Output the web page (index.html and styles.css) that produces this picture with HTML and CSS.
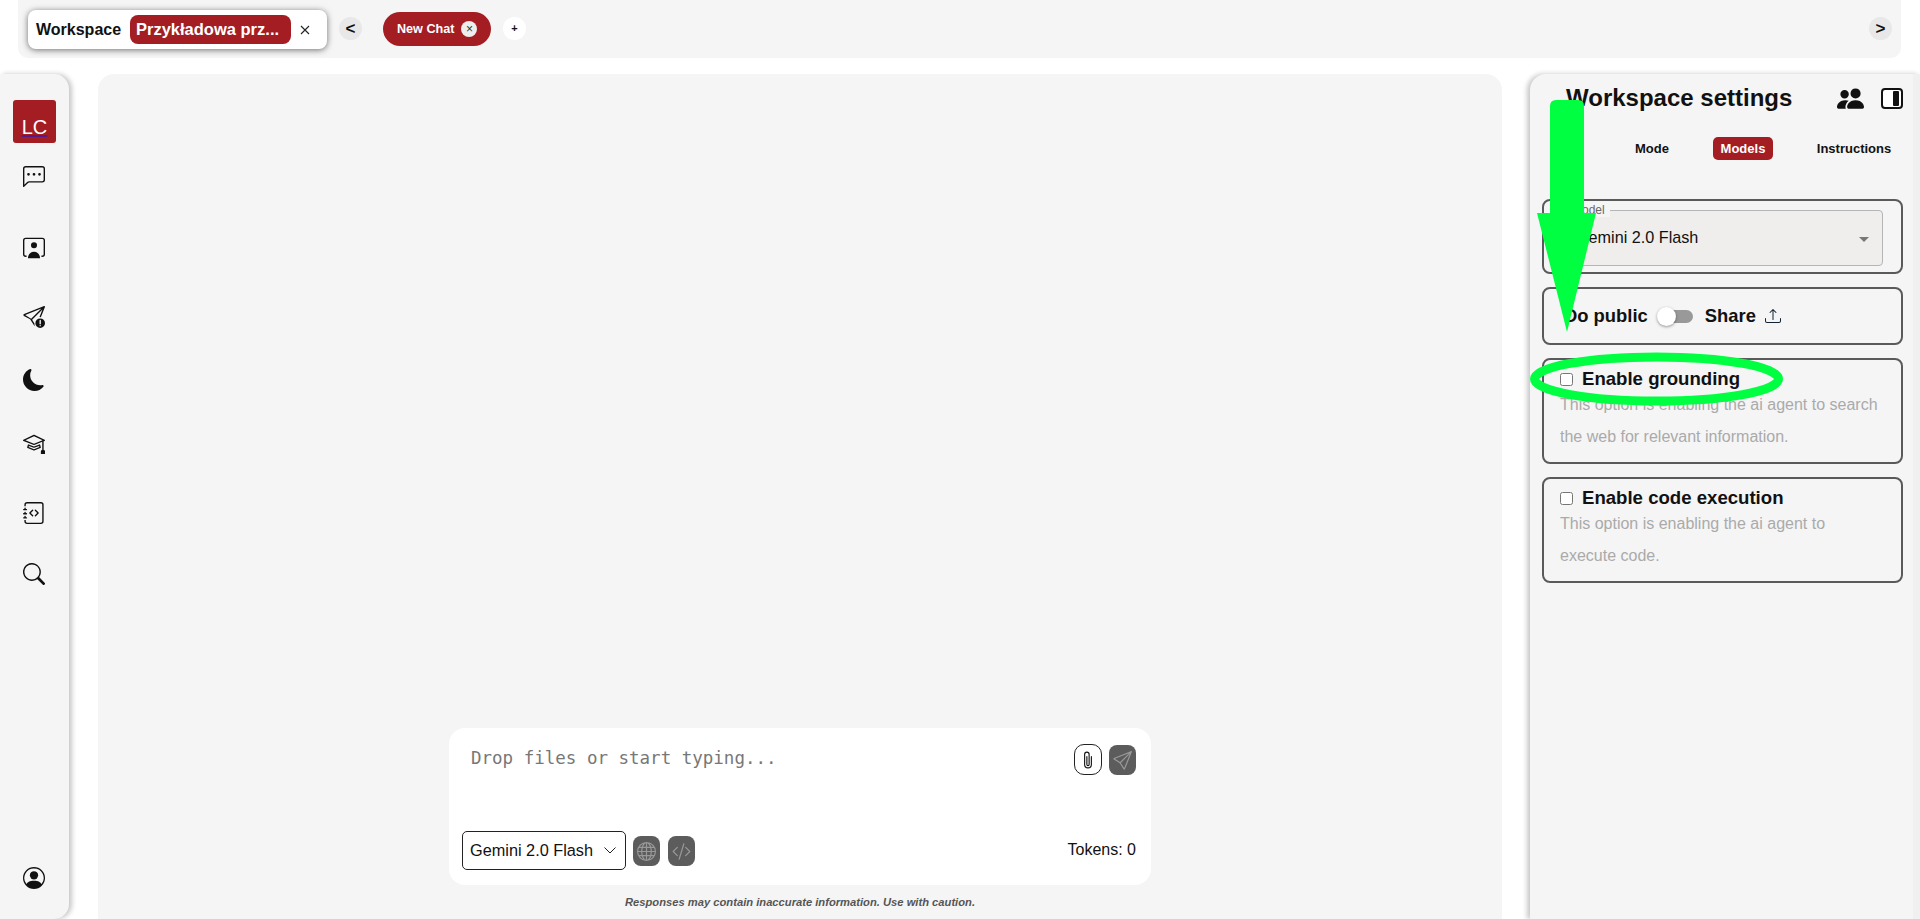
FILE: index.html
```html
<!DOCTYPE html>
<html lang="en">
<head>
    <meta charset="UTF-8">
    <meta name="viewport" content="width=device-width, initial-scale=1.0">
    <title>Workspace</title>
    <link rel="stylesheet" href="styles.css">
</head>
<body>
    <!-- Top tabs -->
    <header class="topbar">
        <div class="workspace-tab">
            <span class="workspace-label">Workspace</span>
            <span class="workspace-name">Przykładowa prz...</span>
            <svg class="workspace-close" viewBox="0 0 10 10"><path d="M1 1l8 8M9 1l-8 8"/></svg>
        </div>
        <button class="round-btn scroll-left">&lt;</button>
        <div class="chat-tab">
            <span>New Chat</span>
            <span class="chat-tab-close">&times;</span>
        </div>
        <button class="round-btn add-btn">+</button>
        <button class="round-btn scroll-right">&gt;</button>
    </header>

    <div class="content">
        <!-- Left menu -->
        <aside class="sidebar">
            <a href="#" class="avatar">LC</a>
            <svg class="side-icon icon-chat" viewBox="0 0 16 16"><path d="M14 1a1 1 0 0 1 1 1v8a1 1 0 0 1-1 1H4.414A2 2 0 0 0 3 11.586l-2 2V2a1 1 0 0 1 1-1h12zM2 0a2 2 0 0 0-2 2v12.793a.5.5 0 0 0 .854.353l2.853-2.853A1 1 0 0 1 4.414 12H14a2 2 0 0 0 2-2V2a2 2 0 0 0-2-2H2z"/><path d="M5 6a1 1 0 1 1-2 0 1 1 0 0 1 2 0zm4 0a1 1 0 1 1-2 0 1 1 0 0 1 2 0zm4 0a1 1 0 1 1-2 0 1 1 0 0 1 2 0z"/></svg>
            <svg class="side-icon icon-video" viewBox="0 0 16 16"><path d="M2 0.5h12a2 2 0 0 1 2 2v10a2 2 0 0 1-2 2h-.6v-1h.6a1 1 0 0 0 1-1v-10a1 1 0 0 0-1-1H2a1 1 0 0 0-1 1v10a1 1 0 0 0 1 1h.6v1H2a2 2 0 0 1-2-2v-10a2 2 0 0 1 2-2z"/><path d="M10.2 6a2.2 2.2 0 1 1-4.400 0 2.200 2.200 0 0 1 4.400 0zM3.600 15.500c0-2.400 1.600-4.700 4.400-4.700s4.400 2.300 4.400 4.700z"/></svg>
            <svg class="side-icon icon-send" viewBox="0 0 16 16"><path d="M15.854.146a.5.5 0 0 1 .11.54L13 8.1a4.500 4.500 0 0 0-1-.1l2.130-5.424-7.494 7.494 1.700 2.630a4.500 4.500 0 0 0 .2 1.800l-.2.100-3.178-4.995L.643 7.184a.75.75 0 0 1 .124-1.33L15.314.037a.5.5 0 0 1 .54.11ZM13.423 1.869 1.591 6.602l4.339 2.760 7.494-7.493Z"/><path fill-rule="evenodd" d="M12.500 16a3.500 3.500 0 1 0 0-7 3.500 3.500 0 0 0 0 7zm.5-5.500a.5.5 0 0 0-1 0v2.400a.5.5 0 0 0 1 0zm0 3.800a.5.5 0 1 0-1 0 .5.5 0 0 0 1 0z"/></svg>
            <svg class="side-icon icon-moon" viewBox="0 0 16 16"><path d="M6 .278a.768.768 0 0 1 .08.858 7.208 7.208 0 0 0-.878 3.46c0 4.021 3.278 7.277 7.318 7.277.527 0 1.040-.055 1.533-.16a.787.787 0 0 1 .81.316.733.733 0 0 1-.031.893A8.349 8.349 0 0 1 8.344 16C3.734 16 0 12.286 0 7.710 0 4.266 2.114 1.312 5.124.060A.752.752 0 0 1 6 .278z"/></svg>
            <svg class="side-icon icon-school" viewBox="0 0 16 16"><path d="M8.211 2.047a.5.5 0 0 0-.422 0l-7.5 3.5a.5.5 0 0 0 .025.917l7.5 3a.5.5 0 0 0 .372 0L14 7.140V13a1 1 0 0 0-1 1v2h3v-2a1 1 0 0 0-1-1V6.739l.686-.275a.5.5 0 0 0 .025-.917l-7.500-3.500ZM8 8.460 1.758 5.965 8 3.052l6.242 2.913L8 8.460Z"/><path d="M4.176 9.032a.5.5 0 0 0-.656.327l-.5 1.700a.5.5 0 0 0 .294.605l4.500 1.800a.5.5 0 0 0 .372 0l4.500-1.800a.5.5 0 0 0 .294-.605l-.5-1.700a.5.5 0 0 0-.656-.327L8 10.466 4.176 9.032Zm-.068 1.873.22-.748 3.496 1.311a.5.5 0 0 0 .352 0l3.496-1.311.22.748L8 12.460l-3.892-1.556Z"/></svg>
            <svg class="side-icon icon-journal" viewBox="0 0 16 16"><path fill-rule="evenodd" d="M8.646 5.646a.5.5 0 0 1 .708 0l2 2a.5.5 0 0 1 0 .708l-2 2a.5.5 0 0 1-.708-.708L10.293 8 8.646 6.354a.5.5 0 0 1 0-.708zm-1.292 0a.5.5 0 0 0-.708 0l-2 2a.5.5 0 0 0 0 .708l2 2a.5.5 0 0 0 .708-.708L5.707 8l1.647-1.646a.5.5 0 0 0 0-.708z"/><path d="M3 0h10a2 2 0 0 1 2 2v12a2 2 0 0 1-2 2H3a2 2 0 0 1-2-2v-1h1v1a1 1 0 0 0 1 1h10a1 1 0 0 0 1-1V2a1 1 0 0 0-1-1H3a1 1 0 0 0-1 1v1H1V2a2 2 0 0 1 2-2z"/><path d="M1 5v-.5a.5.5 0 0 1 1 0V5h.5a.5.5 0 0 1 0 1h-2a.5.5 0 0 1 0-1H1zm0 3v-.5a.5.5 0 0 1 1 0V8h.5a.5.5 0 0 1 0 1h-2a.5.5 0 0 1 0-1H1zm0 3v-.5a.5.5 0 0 1 1 0v.5h.5a.5.5 0 0 1 0 1h-2a.5.5 0 0 1 0-1H1z"/></svg>
            <svg class="side-icon icon-search" viewBox="0 0 16 16"><path d="M11.742 10.344a6.500 6.500 0 1 0-1.397 1.398h-.001c.03.04.062.078.098.115l3.850 3.850a1 1 0 0 0 1.415-1.414l-3.850-3.850a1.007 1.007 0 0 0-.115-.1zM12 6.500a5.500 5.500 0 1 1-11 0 5.500 5.500 0 0 1 11 0z"/></svg>
            <svg class="side-icon icon-profile" viewBox="0 0 16 16"><path d="M11 6a3 3 0 1 1-6 0 3 3 0 0 1 6 0z"/><path fill-rule="evenodd" d="M0 8a8 8 0 1 1 16 0A8 8 0 0 1 0 8zm8-7a7 7 0 0 0-5.468 11.370C3.242 11.226 4.805 10 8 10s4.757 1.225 5.468 2.370A7 7 0 0 0 8 1z"/></svg>
        </aside>

        <!-- Chat area -->
        <main class="main-panel">
            <div class="chat-card">
                <div class="chat-input-row">
                    <span class="placeholder">Drop files or start typing...</span>
                    <div class="chat-actions">
                        <button class="attach-btn">
                            <svg viewBox="0 0 16 16"><path d="M4.500 3a2.500 2.500 0 0 1 5 0v9a1.500 1.500 0 0 1-3 0V5a.5.5 0 0 1 1 0v7a.5.5 0 0 0 1 0V3a1.500 1.500 0 1 0-3 0v9a2.500 2.500 0 0 0 5 0V5a.5.5 0 0 1 1 0v7a3.500 3.500 0 1 1-7 0V3z"/></svg>
                        </button>
                        <button class="grey-btn">
                            <svg viewBox="0 0 16 16"><path d="M15.854.146a.5.5 0 0 1 .11.54l-5.819 14.547a.75.75 0 0 1-1.329.124l-3.178-4.995L.643 7.184a.75.75 0 0 1 .124-1.330L15.314.037a.5.5 0 0 1 .54.11ZM6.636 10.070l2.761 4.338L14.130 2.576 6.636 10.070Zm6.787-8.201L1.591 6.602l4.339 2.760 7.494-7.493Z"/></svg>
                        </button>
                    </div>
                </div>
                <div class="chat-bottom-row">
                    <div class="model-select">
                        <span>Gemini 2.0 Flash</span>
                        <svg viewBox="0 0 12 7"><path d="M.5.5 6 6 11.500.5"/></svg>
                    </div>
                    <button class="grey-btn">
                        <svg viewBox="0 0 16 16"><path d="M0 8a8 8 0 1 1 16 0A8 8 0 0 1 0 8zm7.500-6.923c-.67.204-1.335.82-1.887 1.855A7.970 7.970 0 0 0 5.145 4H7.500V1.077zM4.090 4a9.267 9.267 0 0 1 .64-1.539 6.700 6.700 0 0 1 .597-.933A7.025 7.025 0 0 0 2.255 4H4.090zm-.582 3.500c.03-.877.138-1.718.312-2.500H1.674a6.958 6.958 0 0 0-.656 2.500h2.490zM4.847 5a12.500 12.500 0 0 0-.338 2.500H7.500V5H4.847zM8.500 5v2.500h2.990a12.495 12.495 0 0 0-.337-2.500H8.500zM4.510 8.500a12.500 12.500 0 0 0 .337 2.500H7.500V8.500H4.510zm3.990 0V11h2.653c.187-.765.306-1.608.338-2.500H8.500zM5.145 12c.138.386.295.744.468 1.068.552 1.035 1.218 1.650 1.887 1.855V12H5.145zm.182 2.472a6.696 6.696 0 0 1-.597-.933A9.268 9.268 0 0 1 4.090 12H2.255a7.024 7.024 0 0 0 3.072 2.472zM3.820 11a13.652 13.652 0 0 1-.312-2.500h-2.490c.062.890.291 1.733.656 2.500H3.820zm6.853 3.472A7.024 7.024 0 0 0 13.745 12H11.910a9.270 9.270 0 0 1-.64 1.539 6.688 6.688 0 0 1-.597.933zM8.500 12v2.923c.67-.204 1.335-.82 1.887-1.855.173-.324.33-.682.468-1.068H8.500zm3.680-1h2.146c.365-.767.594-1.610.656-2.500h-2.490a13.650 13.650 0 0 1-.312 2.500zm2.802-3.500a6.959 6.959 0 0 0-.656-2.500H12.180c.174.782.282 1.623.312 2.500h2.490zM11.270 2.461c.247.464.462.98.64 1.539h1.835a7.024 7.024 0 0 0-3.072-2.472c.218.284.418.598.597.933zM10.855 4a7.966 7.966 0 0 0-.468-1.068C9.835 1.897 9.170 1.282 8.500 1.077V4h2.355z"/></svg>
                    </button>
                    <button class="grey-btn">
                        <svg viewBox="0 0 16 16"><path d="M10.478 1.647a.5.5 0 1 0-.956-.294l-4 13a.5.5 0 0 0 .956.294l4-13zM4.854 4.146a.5.5 0 0 1 0 .708L1.707 8l3.147 3.146a.5.5 0 0 1-.708.708l-3.500-3.500a.5.5 0 0 1 0-.708l3.500-3.500a.5.5 0 0 1 .708 0zm6.292 0a.5.5 0 0 0 0 .708L14.293 8l-3.147 3.146a.5.5 0 0 0 .708.708l3.500-3.500a.5.5 0 0 0 0-.708l-3.500-3.500a.5.5 0 0 0-.708 0z"/></svg>
                    </button>
                    <span class="tokens">Tokens: 0</span>
                </div>
            </div>
            <p class="disclaimer">Responses may contain inaccurate information. Use with caution.</p>
        </main>

        <!-- Right settings -->
        <aside class="settings">
            <div class="settings-head">
                <h2>Workspace settings</h2>
                <svg class="people-icon" viewBox="0 0 16 16"><path d="M7 14s-1 0-1-1 1-4 5-4 5 3 5 4-1 1-1 1H7Zm4-6a3 3 0 1 0 0-6 3 3 0 0 0 0 6Zm-5.784 6A2.238 2.238 0 0 1 5 13c0-1.355.68-2.750 1.936-3.720A6.325 6.325 0 0 0 5 9c-4 0-5 3-5 4s1 1 1 1h4.216ZM4.500 8a2.500 2.500 0 1 0 0-5 2.500 2.500 0 0 0 0 5Z"/></svg>
                <div class="panel-icon"><span></span></div>
            </div>

            <div class="settings-tabs">
                <span class="settings-tab tab-mode">Mode</span>
                <span class="settings-tab tab-active">Models</span>
                <span class="settings-tab tab-instructions">Instructions</span>
            </div>

            <section class="box box-model">
                <div class="model-field">
                    <span class="model-label">Model</span>
                    <span>Gemini 2.0 Flash</span>
                    <span class="caret"></span>
                </div>
            </section>

            <section class="box box-share">
                <span class="share-text">Do public</span>
                <span class="toggle"><span class="toggle-knob"></span></span>
                <span class="share-text">Share</span>
                <svg class="upload-icon" viewBox="0 0 16 16"><path d="M.5 9.900a.5.5 0 0 1 .5.5v2.500a1 1 0 0 0 1 1h12a1 1 0 0 0 1-1v-2.500a.5.5 0 0 1 1 0v2.500a2 2 0 0 1-2 2H2a2 2 0 0 1-2-2v-2.500a.5.5 0 0 1 .5-.5z"/><path d="M7.646 1.146a.5.5 0 0 1 .708 0l3 3a.5.5 0 0 1-.708.708L8.500 2.707V11.500a.5.5 0 0 1-1 0V2.707L5.354 4.854a.5.5 0 1 1-.708-.708l3-3z"/></svg>
            </section>

            <section class="box box-option">
                <label class="option-title"><input type="checkbox">Enable grounding</label>
                <p class="option-text">This option is enabling the ai agent to search<br>the web for relevant information.</p>
            </section>

            <section class="box box-option">
                <label class="option-title"><input type="checkbox">Enable code execution</label>
                <p class="option-text">This option is enabling the ai agent to<br>execute code.</p>
            </section>

            <div class="scroll-track"></div>
        </aside>
    </div>

    <!-- Green marks drawn over the screen -->
    <svg class="marks" viewBox="0 0 1920 919">
        <path d="M1556 100h22q6 0 6 6v107h12l-29 119-30-119h13v-107q0-6 6-6z"/>
        <ellipse cx="1656.500" cy="379" rx="122" ry="22"/>
    </svg>
</body>
</html>
```

FILE: styles.css
```css
* {
    box-sizing: border-box;
}

body {
    font-family: 'Liberation Sans', Arial, sans-serif;
    background-color: #fff;
    color: #111;
    margin: 0;
    height: 919px;
    overflow: hidden;
    position: relative;
}

button {
    font-family: inherit;
    border: none;
    padding: 0;
    cursor: pointer;
}

/* Top bar */
.topbar {
    height: 58px;
    margin: 0 19px 16px 18px;
    padding: 10px 9px 0 10px;
    background-color: #f5f5f5;
    border-radius: 0 0 10px 10px;
    display: flex;
    align-items: flex-start;
}

.workspace-tab {
    width: 299px;
    height: 39px;
    background-color: #fff;
    border-radius: 8px;
    box-shadow: 0 1px 6px rgba(0, 0, 0, 0.55);
    display: flex;
    align-items: center;
    padding-left: 8px;
}

.workspace-label {
    font-size: 16px;
    font-weight: bold;
    width: 94px;
}

.workspace-name {
    width: 161px;
    height: 29px;
    line-height: 28px;
    padding-left: 6px;
    background-color: #a31d23;
    color: #fff;
    font-size: 16.5px;
    font-weight: bold;
    border-radius: 8px;
    white-space: nowrap;
}

.workspace-close {
    width: 10px;
    height: 10px;
    margin-left: 9px;
    fill: none;
    stroke: #222;
    stroke-width: 1.1;
}

.round-btn {
    width: 23px;
    height: 23px;
    border-radius: 50%;
    font-size: 17px;
    font-weight: bold;
    line-height: 23px;
    color: #111;
    background-color: #e8e8e8;
    flex-shrink: 0;
}

.scroll-left {
    margin: 7px 0 0 12px;
}

.chat-tab {
    width: 108px;
    height: 34px;
    margin: 2px 0 0 21px;
    background-color: #a31d23;
    color: #fff;
    font-size: 12.6px;
    font-weight: bold;
    border-radius: 17px;
    display: flex;
    align-items: center;
    padding-left: 14px;
    gap: 7px;
}

.chat-tab-close {
    width: 16px;
    height: 16px;
    border-radius: 50%;
    background-color: #eee;
    color: #333;
    font-size: 12px;
    font-weight: normal;
    line-height: 16px;
    text-align: center;
}

.add-btn {
    margin: 7px 0 0 12px;
    background-color: #fff;
    font-size: 11px;
}

.scroll-right {
    margin: 7px 0 0 auto;
}

/* Content row */
.content {
    height: 845px;
    display: flex;
}

.sidebar {
    width: 69px;
    height: 100%;
    background-color: #f5f5f5;
    border-radius: 0 15px 15px 0;
    box-shadow: 3px 0 5px rgba(0, 0, 0, 0.22);
    margin-right: 29px;
    display: flex;
    flex-direction: column;
    align-items: flex-start;
    padding: 26px 0 0 13px;
}

.avatar {
    width: 43px;
    height: 43px;
    background-color: #a31d23;
    color: #fff;
    font-size: 20px;
    line-height: 55px;
    text-align: center;
    border-radius: 3px;
    text-decoration-color: #551a8b;
    display: block;
}

.side-icon {
    width: 22px;
    height: 22px;
    margin-left: 10px;
    flex-shrink: 0;
    fill: #111;
}

.icon-chat { margin-top: 23px; }
.icon-video { margin-top: 49px; }
.icon-send { margin-top: 47px; }
.icon-moon { margin-top: 41px; }
.icon-school { margin-top: 41px; }
.icon-journal { margin-top: 48px; }
.icon-search { margin-top: 39px; }
.icon-profile { margin-top: auto; margin-bottom: 30px; }

/* Chat */
.main-panel {
    width: 1404px;
    height: 100%;
    background-color: #f5f5f5;
    border-radius: 16px 16px 0 0;
    margin-right: 28px;
    display: flex;
    flex-direction: column;
    align-items: center;
    justify-content: flex-end;
}

.chat-card {
    width: 702px;
    height: 157px;
    background-color: #fff;
    border-radius: 16px;
    padding: 16px 15px 15px 13px;
    display: flex;
    flex-direction: column;
    justify-content: space-between;
}

.chat-input-row {
    display: flex;
    justify-content: space-between;
    align-items: flex-start;
}

.placeholder {
    font-family: 'DejaVu Sans Mono', monospace;
    font-size: 17.5px;
    color: #777;
    margin: 4px 0 0 9px;
}

.chat-actions {
    display: flex;
    gap: 7px;
}

.attach-btn {
    width: 28px;
    height: 31px;
    background-color: #fff;
    border: 1px solid #222;
    border-radius: 10px;
    display: flex;
    align-items: center;
    justify-content: center;
}

.attach-btn svg {
    width: 18px;
    height: 18px;
    fill: #111;
}

.grey-btn {
    width: 27px;
    height: 30px;
    margin-top: 1px;
    background-color: #5c5c5c;
    border-radius: 8px;
    display: flex;
    align-items: center;
    justify-content: center;
    flex-shrink: 0;
}

.grey-btn svg {
    width: 19px;
    height: 19px;
    fill: #999;
}

.chat-bottom-row {
    display: flex;
    align-items: center;
    gap: 8px;
}

.model-select {
    width: 164px;
    height: 39px;
    margin-right: -1px;
    border: 1px solid #222;
    border-radius: 5px;
    font-size: 16.3px;
    display: flex;
    align-items: center;
    justify-content: space-between;
    padding: 0 9px 0 7px;
}

.model-select svg {
    width: 12px;
    height: 7px;
    fill: none;
    stroke: #222;
}

.tokens {
    margin: 0 0 2px auto;
    font-size: 16px;
}

.disclaimer {
    margin: 0;
    height: 34px;
    line-height: 34px;
    font-size: 11.2px;
    font-weight: bold;
    font-style: italic;
    color: #555;
}

/* Settings */
.settings {
    width: 390px;
    height: 100%;
    background-color: #f5f5f5;
    border-radius: 16px 0 0 0;
    box-shadow: -3px 0 5px rgba(0, 0, 0, 0.22);
    padding: 0 17px 0 12px;
    position: relative;
}

.settings-head {
    height: 48px;
    display: flex;
    align-items: center;
    padding-left: 24px;
}

.settings-head h2 {
    margin: 0;
    font-size: 24px;
    width: 271px;
    flex-shrink: 0;
}

.people-icon {
    width: 27px;
    height: 27px;
    fill: #111;
    flex-shrink: 0;
}

.panel-icon {
    width: 25px;
    height: 21px;
    margin-left: 17px;
    border: 2px solid #111;
    border-radius: 4px;
    background-color: #fff;
    display: flex;
    justify-content: center;
    padding: 1px 0 1px 8px;
}

.panel-icon span {
    width: 6px;
    background-color: #111;
    border-radius: 1px;
}

.settings-tabs {
    height: 77px;
    position: relative;
    display: flex;
    align-items: flex-start;
    padding-top: 15px;
    font-size: 13px;
    font-weight: bold;
}

.settings-tab {
    height: 23px;
    line-height: 23px;
    text-align: center;
    border-radius: 5px;
}

.tab-mode {
    width: 40px;
    margin-left: 90px;
}

.tab-active {
    width: 60px;
    margin-left: 41px;
    background-color: #a31d23;
    color: #fff;
}

.tab-instructions {
    width: 80px;
    margin-left: 41px;
}

.box {
    width: 361px;
    border: 2px solid #5a5a5a;
    border-radius: 8px;
    margin-bottom: 13px;
}

.box-model {
    height: 75px;
    padding: 9px 18px 0 8px;
}

.model-field {
    height: 56px;
    position: relative;
    background-color: #f0eeec;
    border: 1px solid #b5b5b5;
    border-radius: 4px;
    font-size: 16.2px;
    display: flex;
    align-items: center;
    padding: 0 0 2px 23px;
}

.model-label {
    position: absolute;
    top: -7px;
    left: 14px;
    padding: 0 5px;
    background-color: #f5f5f5;
    font-size: 12px;
    line-height: 13px;
    color: #666;
}

.caret {
    position: absolute;
    right: 13px;
    top: 26px;
    border-left: 5px solid transparent;
    border-right: 5px solid transparent;
    border-top: 5px solid #777;
}

.box-share {
    height: 58px;
    display: flex;
    align-items: center;
    padding-left: 20px;
}

.share-text {
    font-size: 18.4px;
    font-weight: bold;
}

.toggle {
    width: 31px;
    height: 13px;
    margin: 0 12px 0 14px;
    background-color: #999;
    border-radius: 7px;
    position: relative;
}

.toggle-knob {
    position: absolute;
    left: -5px;
    top: -3px;
    width: 19px;
    height: 19px;
    border-radius: 50%;
    background-color: #fff;
    box-shadow: 0 1px 3px rgba(0, 0, 0, 0.4);
}

.upload-icon {
    width: 16px;
    height: 16px;
    margin-left: 9px;
    fill: #123;
}

.box-option {
    height: 106px;
    padding: 8px 14px 0 16px;
}

.option-title {
    display: flex;
    align-items: center;
    font-size: 18.6px;
    font-weight: bold;
    height: 21px;
}

.option-title input {
    width: 13px;
    height: 13px;
    margin: 1px 9px 0 0;
}

.option-text {
    margin: 0;
    font-size: 16px;
    line-height: 32px;
    color: #aaa;
}

.scroll-track {
    position: absolute;
    right: 0;
    top: 0;
    width: 7px;
    height: 100%;
    background-color: #f0f0f0;
}

/* Green marks */
.marks {
    position: absolute;
    left: 0;
    top: 0;
    width: 1920px;
    height: 919px;
    pointer-events: none;
}

.marks path {
    fill: #00ff41;
}

.marks ellipse {
    fill: none;
    stroke: #00ff41;
    stroke-width: 9;
}
```
